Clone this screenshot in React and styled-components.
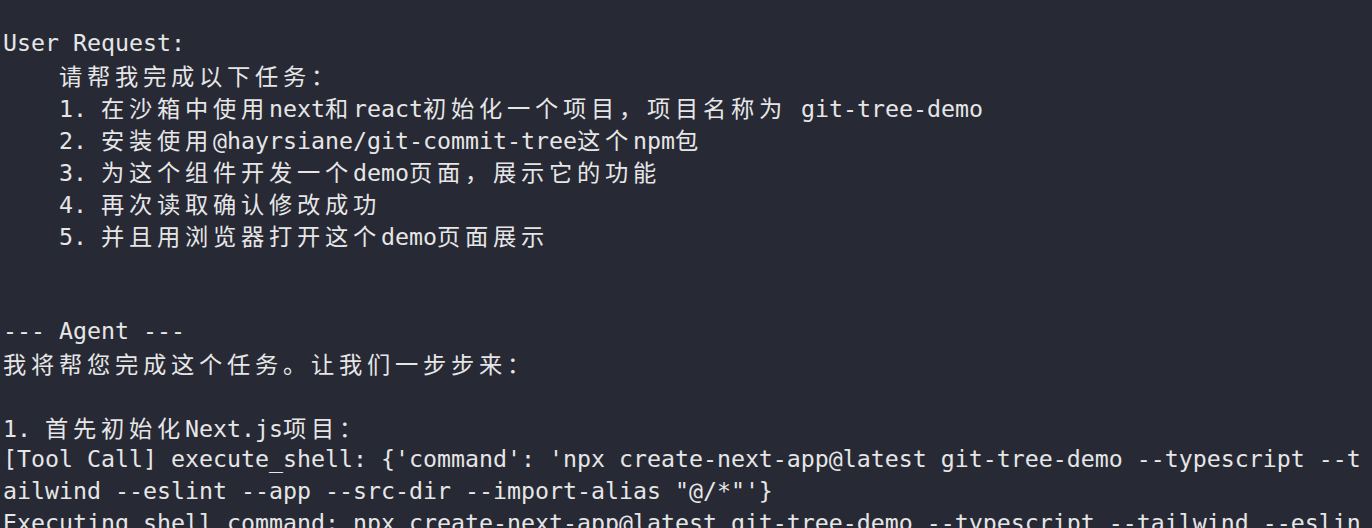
import React from 'react'
import styled, { createGlobalStyle } from 'styled-components'

const GlobalStyle = createGlobalStyle`
  html, body {
    margin: 0;
    padding: 0;
    background: #272935;
    overflow: hidden;
  }
`;

const Terminal = styled.div`
  width: 1372px;
  height: 528px;
  box-sizing: border-box;
  padding: 27px 0 0 3px;
  background: #272935;
  color: #e6e6e6;
  font-family: "DejaVu Sans Mono", "Noto Sans CJK SC", monospace;
  font-size: 23.25px;
  line-height: 32px;
  overflow: hidden;
  display: flex;
  flex-direction: column;
`;

const Line = styled.div`
  flex-shrink: 0;
  height: 32px;
  white-space: pre;
`;

// double-width cell for CJK glyphs, like a terminal grid
const Wide = styled.span`
  font-family: "Noto Sans CJK SC", sans-serif;
  letter-spacing: 4.75px;
`;

const isWide = (ch) => ch.codePointAt(0) >= 0x2e80;

function Text({ children }) {
  const runs = [];
  for (const ch of children) {
    const wide = isWide(ch);
    const last = runs[runs.length - 1];
    if (last && last.wide === wide) last.text += ch;
    else runs.push({ wide, text: ch });
  }
  return runs.map((r, i) =>
    r.wide ? <Wide key={i}>{r.text}</Wide> : <React.Fragment key={i}>{r.text}</React.Fragment>
  );
}

const lines = [
  'User Request:',
  '    请帮我完成以下任务：',
  '    1. 在沙箱中使用next和react初始化一个项目，项目名称为 git-tree-demo',
  '    2. 安装使用@hayrsiane/git-commit-tree这个npm包',
  '    3. 为这个组件开发一个demo页面，展示它的功能',
  '    4. 再次读取确认修改成功',
  '    5. 并且用浏览器打开这个demo页面展示',
  '',
  '',
  '--- Agent ---',
  '我将帮您完成这个任务。让我们一步步来：',
  '',
  '1. 首先初始化Next.js项目：',
  "[Tool Call] execute_shell: {'command': 'npx create-next-app@latest git-tree-demo --typescript --t",
  'ailwind --eslint --app --src-dir --import-alias "@/*"\'}',
  'Executing shell command: npx create-next-app@latest git-tree-demo --typescript --tailwind --eslin',
];

export default function App() {
  return (
    <>
      <GlobalStyle />
      <Terminal>
        {lines.map((l, i) => (
          <Line key={i}>
            <Text>{l}</Text>
          </Line>
        ))}
      </Terminal>
    </>
  )
}
